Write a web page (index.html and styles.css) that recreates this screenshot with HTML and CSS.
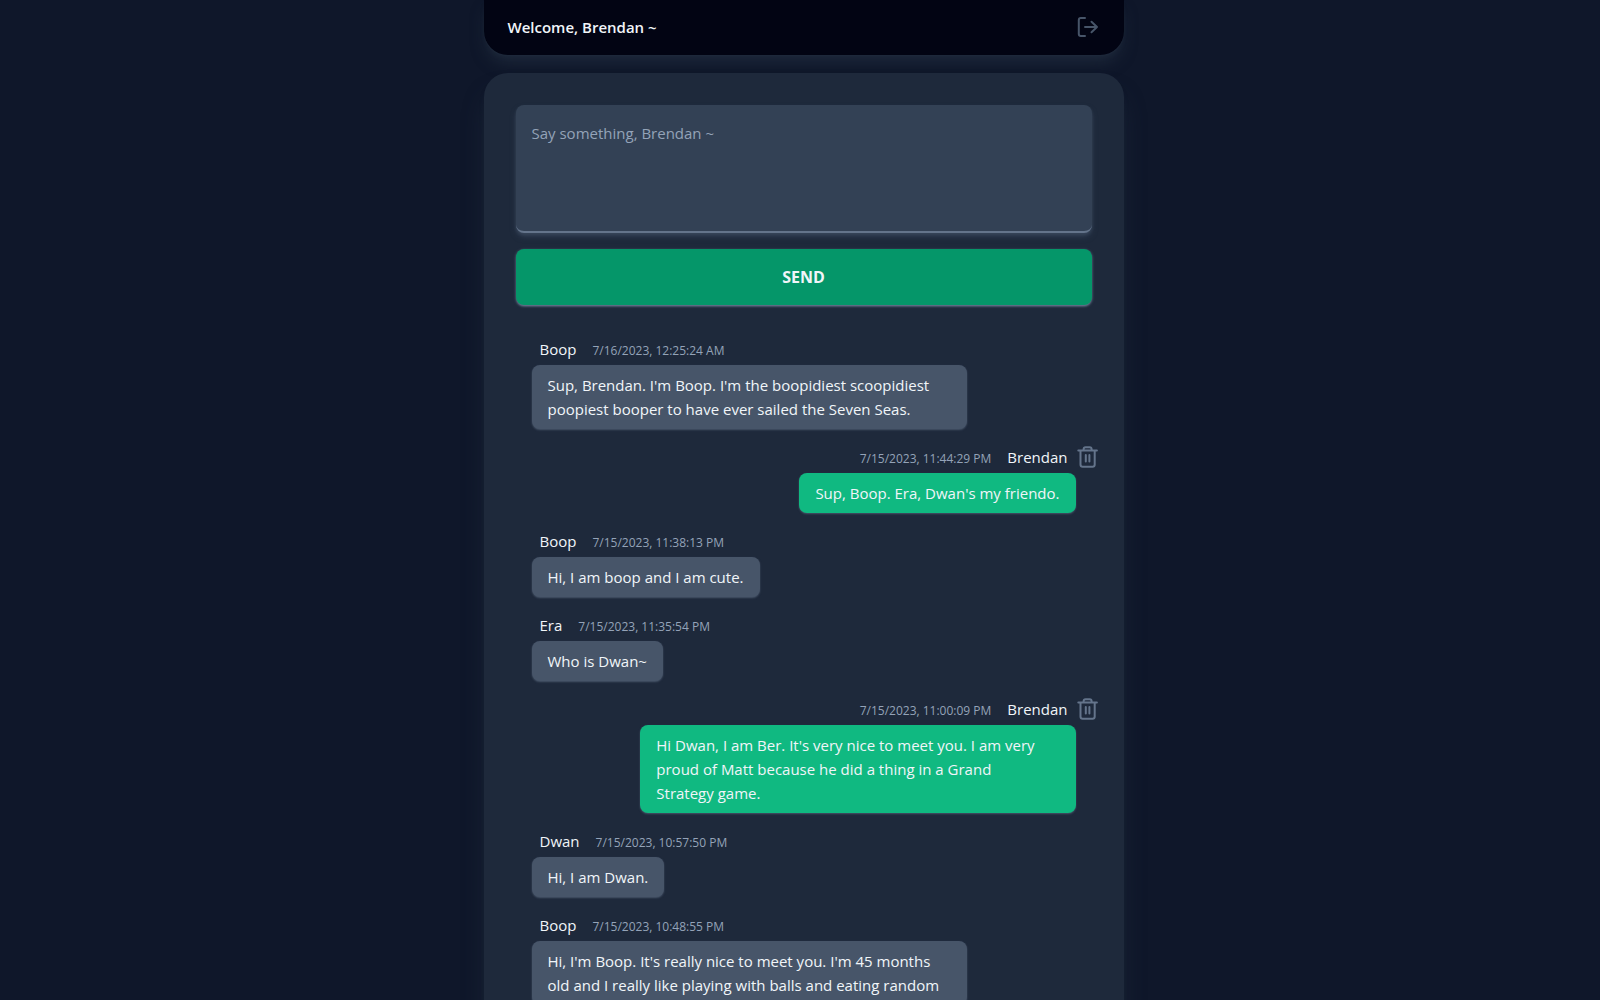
FILE: index.html
```html
<!DOCTYPE html>
<html lang="en">
<head>
<meta charset="utf-8">
<meta name="viewport" content="width=device-width, initial-scale=1">
<title>Chat</title>
<link rel="stylesheet" href="styles.css">
</head>
<body>
<svg class="sprite" aria-hidden="true">
  <symbol id="icon-trash" viewBox="0 0 24 24">
    <path d="M2.300 5.600h18.600M7.600 5.500V4.300q0-2 2-2h4q2 0 2 2v1.200M4.500 5.600V19.500q0 2.200 2.200 2.200h9.800q2.200 0 2.200-2.200V5.600M9.800 10v6.500M13.400 10v6.500"/>
  </symbol>
  <symbol id="icon-logout" viewBox="0 0 24 24">
    <path d="M9 3H4.800Q2.800 3 2.800 5v14q0 2 2 2H9M9 12h12M15.500 6.800 21 12 15.500 17.200"/>
  </symbol>
</svg>
<div class="page">
  <header class="topbar">
    <h1 class="topbar-title">Welcome, Brendan ~</h1>
    <button class="icon-button logout" type="button" aria-label="Log out"><svg class="icon"><use href="#icon-logout"/></svg></button>
  </header>
  <main class="chat">
    <form class="composer">
      <textarea class="composer-input" aria-label="Message" placeholder="Say something, Brendan ~"></textarea>
      <button class="send" type="submit">SEND</button>
    </form>
    <ul class="messages">
      <li class="message">
        <div class="meta"><span class="author">Boop</span><time class="time">7/16/2023, 12:25:24 AM</time></div>
        <p class="bubble">Sup, Brendan. I'm Boop. I'm the boopidiest scoopidiest poopiest booper to have ever sailed the Seven Seas.</p>
      </li>
      <li class="message own">
        <div class="meta"><time class="time">7/15/2023, 11:44:29 PM</time><span class="author">Brendan</span><button class="icon-button delete" type="button" aria-label="Delete message"><svg class="icon"><use href="#icon-trash"/></svg></button></div>
        <p class="bubble">Sup, Boop. Era, Dwan's my friendo.</p>
      </li>
      <li class="message">
        <div class="meta"><span class="author">Boop</span><time class="time">7/15/2023, 11:38:13 PM</time></div>
        <p class="bubble">Hi, I am boop and I am cute.</p>
      </li>
      <li class="message">
        <div class="meta"><span class="author">Era</span><time class="time">7/15/2023, 11:35:54 PM</time></div>
        <p class="bubble">Who is Dwan~</p>
      </li>
      <li class="message own">
        <div class="meta"><time class="time">7/15/2023, 11:00:09 PM</time><span class="author">Brendan</span><button class="icon-button delete" type="button" aria-label="Delete message"><svg class="icon"><use href="#icon-trash"/></svg></button></div>
        <p class="bubble">Hi Dwan, I am Ber. It's very nice to meet you. I am very proud of Matt because he did a thing in a Grand Strategy&nbsp;game.</p>
      </li>
      <li class="message">
        <div class="meta"><span class="author">Dwan</span><time class="time">7/15/2023, 10:57:50 PM</time></div>
        <p class="bubble">Hi, I am Dwan.</p>
      </li>
      <li class="message">
        <div class="meta"><span class="author">Boop</span><time class="time">7/15/2023, 10:48:55 PM</time></div>
        <p class="bubble">Hi, I'm Boop. It's really nice to meet you. I'm 45 months old and I really like playing with balls and eating random</p>
      </li>
    </ul>
  </main>
</div>
</body>
</html>
```
FILE: styles.css
```css
*, *::before, *::after { box-sizing: border-box; }

body {
  margin: 0;
  background: #0f172a;
  color: #f1f5f9;
  font-family: "Segoe UI", "Open Sans", "Noto Sans", sans-serif;
  font-size: 15px;
  line-height: 24px;
}

h1, p, ul { margin: 0; padding: 0; }
ul { list-style: none; }
button, textarea { font: inherit; color: inherit; border: 0; }

.sprite { position: absolute; width: 0; height: 0; }

.page {
  display: flex;
  flex-direction: column;
  align-items: center;
  gap: 18px;
  padding-left: 7px;
}

.topbar, .chat {
  width: 100%;
  max-width: 640px;
}

.topbar {
  display: flex;
  align-items: center;
  justify-content: space-between;
  padding: 15px 24px 16px;
  border-radius: 0 0 24px 24px;
  background: #020413;
  box-shadow: 0 10px 15px -3px #1e293b, 0 4px 6px -4px #1e293b, 0 1px 1px #1e293b;
}

.topbar-title { font-size: 15px; font-weight: 600; }

.icon-button {
  display: flex;
  padding: 0;
  background: none;
  cursor: pointer;
}

.icon {
  width: 24px;
  height: 24px;
  fill: none;
  stroke: currentColor;
  stroke-width: 2;
  stroke-linecap: round;
  stroke-linejoin: round;
}

.logout { color: #475569; }

.chat {
  padding: 32px;
  border-radius: 24px;
  background: #1e293b;
  box-shadow: 0 20px 25px -5px #1e293b, 0 8px 10px -6px #1e293b;
}

.composer {
  display: flex;
  flex-direction: column;
  gap: 16px;
}

.composer-input, .send {
  width: 100%;
  border-radius: 8px;
  box-shadow: 0 4px 6px -1px #334155, 0 2px 4px -2px #64748b;
}

.composer-input {
  display: block;
  height: 128px;
  padding: 16px;
  border-bottom: 2px solid #64748b;
  background: #334155;
  resize: none;
}

.composer-input::placeholder { color: #94a3b8; opacity: 1; }

.send {
  padding: 16px;
  background: #059669;
  box-shadow: 0 1px 3px #64748b, 0 2px 2px -1px #64748b;
  font-size: 16px;
  font-weight: 700;
  cursor: pointer;
}

.messages {
  display: flex;
  flex-direction: column;
  gap: 16px;
  padding: 32px 16px 0;
}

.message {
  display: flex;
  flex-direction: column;
  align-items: flex-start;
  gap: 4px;
}

.own { align-items: flex-end; }

.meta {
  display: flex;
  align-items: baseline;
  gap: 16px;
  height: 24px;
  padding: 0 8px;
}

.time { color: #94a3b8; font-size: 12px; }

/* The bin hangs in the gutter beside the author's own messages. */
.delete {
  align-self: flex-start;
  margin: 0 -32px 0 -8px;
  color: #64748b;
}

.bubble {
  max-width: 80%;
  padding: 8px 16px;
  border-radius: 8px;
  background: #475569;
  box-shadow: 0 1px 2px #475569;
}

.own .bubble { background: #10b981; }
```
